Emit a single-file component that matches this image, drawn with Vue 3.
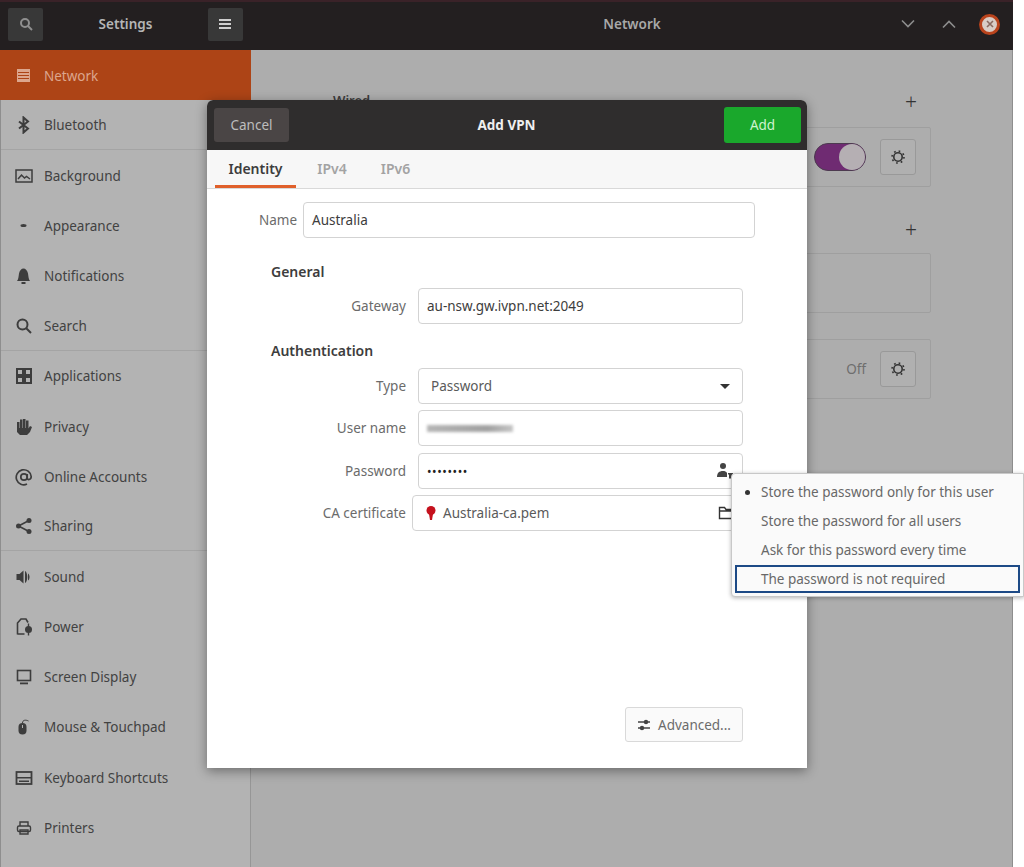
<script setup>
const navItems = [
  { label: 'Network', icon: 'network', active: true },
  { label: 'Bluetooth', icon: 'bluetooth', divider: true },
  { label: 'Background', icon: 'background' },
  { label: 'Appearance', icon: 'appearance' },
  { label: 'Notifications', icon: 'bell' },
  { label: 'Search', icon: 'search', divider: true },
  { label: 'Applications', icon: 'apps' },
  { label: 'Privacy', icon: 'hand' },
  { label: 'Online Accounts', icon: 'at' },
  { label: 'Sharing', icon: 'share', divider: true },
  { label: 'Sound', icon: 'sound' },
  { label: 'Power', icon: 'power' },
  { label: 'Screen Display', icon: 'screen' },
  { label: 'Mouse & Touchpad', icon: 'mouse' },
  { label: 'Keyboard Shortcuts', icon: 'keyboard' },
  { label: 'Printers', icon: 'printer' }
]

const tabs = ['Identity', 'IPv4', 'IPv6']

const passwordOptions = [
  { label: 'Store the password only for this user', checked: true },
  { label: 'Store the password for all users' },
  { label: 'Ask for this password every time' },
  { label: 'The password is not required', focused: true }
]
</script>

<template>
  <div class="screen">
    <header class="titlebar">
      <div class="titlebar-left">
        <button class="bar-btn">
          <svg width="16" height="16" viewBox="0 0 16 16" fill="none" stroke="#8f8f8f" stroke-width="2"><circle cx="7" cy="7" r="4" /><path d="M10 10l4 4" /></svg>
        </button>
        <span class="app-title">Settings</span>
        <button class="bar-btn">
          <svg width="14" height="14" viewBox="0 0 14 14" fill="#cfcfcf"><rect x="1" y="2" width="12" height="2" /><rect x="1" y="6" width="12" height="2" /><rect x="1" y="10" width="12" height="2" /></svg>
        </button>
      </div>
      <div class="titlebar-center">Network</div>
      <div class="window-controls">
        <svg width="16" height="10" viewBox="0 0 16 10" fill="none" stroke="#8d8d8d" stroke-width="1.6"><path d="M2 1.5l6 6 6-6" /></svg>
        <svg width="16" height="10" viewBox="0 0 16 10" fill="none" stroke="#8d8d8d" stroke-width="1.6"><path d="M2 8.500l6-6 6 6" /></svg>
        <span class="close-btn">
          <svg width="8" height="8" viewBox="0 0 8 8" stroke="#8a6a60" stroke-width="1.6"><path d="M1 1l6 6M7 1l-6 6" /></svg>
        </span>
      </div>
    </header>

    <div class="body">
      <nav class="sidebar">
        <div
          v-for="item in navItems"
          :key="item.label"
          class="nav-item"
          :class="{ active: item.active, divider: item.divider }"
        >
          <svg class="nav-icon" width="18" height="18" viewBox="0 0 18 18">
            <g v-if="item.icon === 'network'"><path d="M2 2h13v13H2z" /><path d="M3 5.500h11M3 8.500h11M3 11.500h11" stroke="#ad4416" stroke-width="1.200" fill="none" /></g>
            <path v-else-if="item.icon === 'bluetooth'" d="M4 5.500l9 7-4.500 4V1.500l4.500 4-9 7" fill="none" stroke="#3d3d3d" stroke-width="2" />
            <g v-else-if="item.icon === 'background'" fill="none" stroke="#3d3d3d" stroke-width="1.500"><rect x="1" y="3" width="16" height="12" /><path d="M3 12l3.500-4 3 3 2-1.500 3.500 2.500" /></g>
            <ellipse v-else-if="item.icon === 'appearance'" cx="8.500" cy="8.500" rx="3" ry="1.500" />
            <path v-else-if="item.icon === 'bell'" d="M2 14c1.500-2 1.500-4.500 2-7.500C4.500 3.500 6.500 1.500 8.500 1.500s4 2 4.500 5c.5 3 .5 5.500 2 7.500zM6.500 15h4v2h-4z" />
            <g v-else-if="item.icon === 'search'" fill="none" stroke="#3d3d3d" stroke-width="2"><circle cx="7.500" cy="7.500" r="5" /><path d="M11 11l5 5" /></g>
            <g v-else-if="item.icon === 'apps'" fill="none" stroke="#3d3d3d" stroke-width="2"><rect x="2" y="2" width="6" height="6" /><rect x="10" y="2" width="6" height="6" /><rect x="2" y="10" width="6" height="6" /><rect x="10" y="10" width="6" height="6" /></g>
            <path v-else-if="item.icon === 'hand'" d="M2 4h2.500v6H5V1.500h2.500V10H8V1h2.500v9H11V2.500h2.500v8L15 8l2 1-2 5-3 3H5l-3-3z" />
            <g v-else-if="item.icon === 'at'" fill="none" stroke="#3d3d3d" stroke-width="1.700"><circle cx="9" cy="9" r="3.200" /><path d="M12.200 6v4c0 2.500 4 2 4-1.500A7.500 7.500 0 1 0 12 16" /></g>
            <g v-else-if="item.icon === 'share'"><circle cx="14" cy="3.500" r="2.500" /><circle cx="14" cy="14.500" r="2.500" /><circle cx="3.500" cy="9" r="2.500" /><path d="M14 3.500L3.500 9 14 14.500" fill="none" stroke="#3d3d3d" stroke-width="1.600" /></g>
            <path v-else-if="item.icon === 'sound'" d="M1.500 6h3l4-3.500v13l-4-3.500h-3zM10 3c3 1 3 11 0 12zM13 5.500c2 1 2 6 0 7z" />
            <g v-else-if="item.icon === 'power'"><path d="M2.500 16.500V5L6 1h5l2 3.500M2.500 16h7" fill="none" stroke="#3d3d3d" stroke-width="1.600" /><circle cx="13.500" cy="11.500" r="3.500" /><path d="M12.800 5.500h1.400v12h-1.400z" /></g>
            <g v-else-if="item.icon === 'screen'"><rect x="2.500" y="2.500" width="13" height="10" fill="none" stroke="#3d3d3d" stroke-width="1.600" /><rect x="5" y="14.500" width="8" height="1.800" /></g>
            <g v-else-if="item.icon === 'mouse'"><rect x="3.500" y="5" width="8" height="11.500" rx="4" /><path d="M7.500 5c0-3 3-3.500 6-2" fill="none" stroke="#3d3d3d" stroke-width="1" /><rect x="7" y="7" width="1" height="3" fill="#b3b3b3" /></g>
            <g v-else-if="item.icon === 'keyboard'"><rect x="1.500" y="3" width="15" height="12" fill="none" stroke="#3d3d3d" stroke-width="1.800" /><path d="M2 8h14v1.500H2z" /><path d="M4 11.500h10v1.500H4z" /></g>
            <g v-else-if="item.icon === 'printer'" fill="none" stroke="#3d3d3d" stroke-width="1.400"><path d="M5 7V3h8v4" /><rect x="2.500" y="7" width="13" height="5.500" rx="1.500" /><path d="M5 11h8v4H5z" /></g>
          </svg>
          <span>{{ item.label }}</span>
        </div>
      </nav>

      <main class="panel">
        <div class="panel-heading"><span class="panel-title">Wired</span><span class="plus">+</span></div>
        <div class="panel-card card-wired">
          <span class="switch"><span class="knob"></span></span>
          <span class="gear-btn">
            <svg width="16" height="16" viewBox="0 0 16 16" fill="none" stroke="#333"><circle cx="8" cy="8" r="4.200" stroke-width="1.600" /><circle cx="8" cy="8" r="6" stroke-width="1.600" stroke-dasharray="1.700 3" /></svg>
          </span>
        </div>
        <div class="panel-heading heading-vpn"><span></span><span class="plus">+</span></div>
        <div class="panel-card card-vpn"></div>
        <div class="panel-card card-proxy">
          <span class="off-label">Off</span>
          <span class="gear-btn">
            <svg width="16" height="16" viewBox="0 0 16 16" fill="none" stroke="#333"><circle cx="8" cy="8" r="4.200" stroke-width="1.600" /><circle cx="8" cy="8" r="6" stroke-width="1.600" stroke-dasharray="1.700 3" /></svg>
          </span>
        </div>
      </main>
    </div>

    <section class="dialog">
      <header class="dialog-header">
        <button class="btn-cancel">Cancel</button>
        <span class="dialog-title">Add VPN</span>
        <button class="btn-add">Add</button>
      </header>

      <div class="tabs">
        <span
          v-for="(tab, i) in tabs"
          :key="tab"
          class="tab"
          :class="{ current: i === 0 }"
        >{{ tab }}</span>
      </div>

      <div class="dialog-body">
        <div class="name-row">
          <label>Name</label>
          <div class="field">Australia</div>
        </div>

        <div class="form">
          <h3 class="section-title">General</h3>
          <label>Gateway</label>
          <div class="field">au-nsw.gw.ivpn.net:2049</div>

          <h3 class="section-title section-auth">Authentication</h3>
          <label>Type</label>
          <div class="field select">
            <span>Password</span>
            <span class="caret"></span>
          </div>
          <label>User name</label>
          <div class="field"><span class="blurred-name"></span></div>
          <label>Password</label>
          <div class="field field-password">
            <span class="dots">••••••••</span>
            <svg width="18" height="18" viewBox="0 0 18 18" fill="#444"><circle cx="7" cy="4" r="3" /><path d="M1 15c0-4 2-6 6-6 2 0 3 .6 4 2v4z" /><path d="M12 11h5v1.500h-1v4h-3v-4h-1z" /></svg>
          </div>
          <label>CA certificate</label>
          <div class="field field-file">
            <svg class="cert-icon" width="10" height="14" viewBox="0 0 10 14" fill="#c5111d"><circle cx="5" cy="4.500" r="4.500" /><path d="M3 8h4l-1 6H4z" /></svg>
            <span class="file-name">Australia-ca.pem</span>
            <svg width="16" height="16" viewBox="0 0 16 16" fill="none" stroke="#333" stroke-width="1.400"><path d="M1.500 13.500v-11h5l1.500 2h6.500v9zM1.500 6h13" /></svg>
          </div>
        </div>

        <div class="dialog-footer">
          <button class="btn-advanced">
            <svg width="14" height="14" viewBox="0 0 14 14" fill="none" stroke="#444" stroke-width="1.400"><path d="M1 4h12M1 10h12" /><circle cx="9" cy="4" r="1.500" fill="#444" /><circle cx="5" cy="10" r="1.500" fill="#444" /></svg>
            <span>Advanced...</span>
          </button>
        </div>
      </div>
    </section>

    <div class="popover">
      <div
        v-for="option in passwordOptions"
        :key="option.label"
        class="popover-item"
        :class="{ focused: option.focused }"
      >
        <span class="bullet"><span v-if="option.checked" class="bullet-dot"></span></span>
        <span>{{ option.label }}</span>
      </div>
    </div>
  </div>
</template>

<style>
html, body {
  margin: 0;
  background: #fff;
}
</style>

<style scoped>
.screen {
  position: relative;
  width: 1024px;
  height: 867px;
  overflow: hidden;
  font-family: "Noto Sans", "Open Sans", sans-serif;
  font-size: 13.5px;
  color: #3d3d3d;
}

button {
  font: inherit;
  border: none;
  padding: 0;
}

.titlebar {
  width: 1013px;
  height: 50px;
  box-sizing: border-box;
  padding-bottom: 2px;
  display: flex;
  align-items: center;
  background: #231f20;
  box-shadow: inset 0 2px 0 #3a2228;
}

.titlebar-left {
  width: 251px;
  box-sizing: border-box;
  padding: 0 8px;
  display: flex;
  align-items: center;
  justify-content: space-between;
}

.bar-btn {
  width: 35px;
  height: 33px;
  display: flex;
  align-items: center;
  justify-content: center;
  background: #383838;
  border-radius: 2px;
}

.app-title {
  font-weight: 600;
  color: #b5b5b5;
}

.titlebar-center {
  flex: 1;
  text-align: center;
  font-weight: 600;
  color: #a8a8a8;
  padding-left: 113px;
}

.window-controls {
  display: flex;
  align-items: center;
  gap: 25px;
  padding-right: 13px;
}

.close-btn {
  width: 21px;
  height: 21px;
  margin-left: -3px;
  display: flex;
  align-items: center;
  justify-content: center;
  border-radius: 50%;
  background: #d9cdc6;
  border: 3px solid #b9431c;
  box-sizing: border-box;
}

.body {
  display: flex;
  width: 1013px;
  height: 817px;
}

.sidebar {
  width: 251px;
  flex-shrink: 0;
  box-sizing: border-box;
  background: #b3b3b3;
  border-left: 1px solid #8e8e8e;
  border-right: 1px solid #969696;
}

.nav-item {
  height: 50.15px;
  box-sizing: border-box;
  display: flex;
  align-items: center;
  gap: 11px;
  padding: 1px 0 0 14px;
  color: #424242;
}

.nav-item.active {
  background: #ad4416;
  color: #dca68d;
  margin-left: -1px;
  padding-left: 15px;
  margin-right: -1px;
}

.nav-item.divider {
  border-bottom: 1px solid #a4a4a4;
}

.nav-icon {
  flex-shrink: 0;
  fill: #3d3d3d;
}

.nav-item.active .nav-icon {
  fill: #dca68d;
}

.panel {
  flex: 1;
  background: #adadad;
  border-right: 1px solid #8e8e8e;
  box-sizing: border-box;
  padding: 41px 81px 0 82px;
}

.panel-heading {
  height: 36px;
  display: flex;
  justify-content: space-between;
  align-items: flex-start;
}

.panel-title {
  font-weight: 600;
  font-size: 13px;
  color: #3d3d3d;
}

.plus {
  font-size: 21px;
  line-height: 22px;
  color: #333;
  font-weight: 300;
  margin-right: 14px;
}

.panel-card {
  border: 1px solid #9f9f9f;
  border-radius: 2px;
  margin-left: auto;
  width: 597px;
  box-sizing: border-box;
  display: flex;
  align-items: center;
  justify-content: flex-end;
  gap: 14px;
  padding-right: 14px;
}

.card-wired {
  height: 60px;
}

.heading-vpn {
  margin-top: 32px;
  height: 34px;
}

.card-vpn {
  height: 60px;
}

.card-proxy {
  height: 60px;
  margin-top: 26px;
}

.off-label {
  color: #6e6e6e;
}

.switch {
  width: 52px;
  height: 28px;
  box-sizing: border-box;
  border: 1px solid #4d3a50;
  border-radius: 14px;
  background: #6f2b72;
  display: flex;
  justify-content: flex-end;
}

.knob {
  width: 26px;
  height: 26px;
  border-radius: 50%;
  background: #b5afb3;
}

.gear-btn {
  width: 36px;
  height: 36px;
  box-sizing: border-box;
  border: 1px solid #999;
  border-radius: 3px;
  background: #b0b0b0;
  display: flex;
  align-items: center;
  justify-content: center;
}

.dialog {
  position: absolute;
  left: 207px;
  top: 100px;
  width: 600px;
  height: 668px;
  display: flex;
  flex-direction: column;
  background: #fff;
  border-radius: 6px 6px 0 0;
  box-shadow: 0 3px 12px rgba(0, 0, 0, 0.4);
}

.dialog-header {
  height: 50px;
  flex-shrink: 0;
  box-sizing: border-box;
  padding: 7px 6px 7px 7px;
  display: flex;
  align-items: center;
  justify-content: space-between;
  background: #2f2d2d;
  border-radius: 6px 6px 0 0;
}

.btn-cancel {
  width: 75px;
  height: 34px;
  background: #4a4545;
  color: #bdbdbd;
  border-radius: 3px;
}

.dialog-title {
  font-weight: 700;
  color: #efefef;
}

.btn-add {
  width: 77px;
  height: 36px;
  background: #1aa82c;
  color: #cff3cf;
  border-radius: 3px;
}

.tabs {
  height: 39px;
  flex-shrink: 0;
  box-sizing: border-box;
  padding-left: 8px;
  display: flex;
  gap: 8.5px;
  background: #f7f7f7;
  border-bottom: 1px solid #d9d9d9;
}

.tab {
  width: 55px;
  box-sizing: border-box;
  height: 38px;
  line-height: 37px;
  text-align: center;
  font-weight: 600;
  color: #a3a3a3;
  font-size: 14px;
}

.tab.current {
  width: 81px;
  margin-right: -8.5px;
  color: #3d3d3d;
  border-bottom: 3px solid #e0602b;
}

.tab.current + .tab {
  margin-left: 8.5px;
}

.dialog-body {
  flex: 1;
  display: flex;
  flex-direction: column;
  padding: 13px 64px 26px 40px;
  box-sizing: border-box;
}

.name-row {
  display: flex;
  align-items: center;
  gap: 6px;
  margin-right: -12px;
}

.name-row label {
  width: 50px;
}

.name-row .field {
  flex: 1;
}

label {
  color: #6b6b6b;
  text-align: right;
}

.field {
  height: 36px;
  box-sizing: border-box;
  border: 1px solid #d3d3d3;
  border-radius: 4px;
  padding: 0 8px;
  display: flex;
  align-items: center;
  background: #fff;
  color: #3d3d3d;
}

.form {
  display: grid;
  grid-template-columns: 159px 1fr;
  column-gap: 12px;
  row-gap: 6px;
  align-items: center;
  margin-top: 24px;
}

.section-title {
  grid-column: 1 / -1;
  margin: 0 0 0 24px;
  font-size: 14px;
  font-weight: 600;
  line-height: 20px;
  color: #3d3d3d;
}

.section-auth {
  margin-top: 11px;
  margin-bottom: 1px;
}

.select {
  justify-content: space-between;
  padding: 0 12px;
  color: #5a5a5a;
}

.caret {
  width: 0;
  height: 0;
  border-left: 5px solid transparent;
  border-right: 5px solid transparent;
  border-top: 5px solid #333;
}

.blurred-name {
  width: 86px;
  height: 7px;
  background: linear-gradient(90deg, #b5b5b5, #a0a0a0 70%, #c5c5c5);
  filter: blur(1.500px);
}

.field-password {
  margin-top: 1px;
  justify-content: space-between;
  padding-right: 8px;
}

.dots {
  font-size: 12px;
  letter-spacing: 0.6px;
  color: #222;
}

.field-file {
  margin-left: -6px;
  gap: 7px;
  padding-right: 8px;
  color: #5a5a5a;
}

.cert-icon {
  margin-left: 5px;
}

.file-name {
  flex: 1;
}

.dialog-footer {
  margin-top: auto;
  display: flex;
  justify-content: flex-end;
}

.btn-advanced {
  width: 118px;
  height: 35px;
  display: flex;
  align-items: center;
  justify-content: center;
  gap: 7px;
  background: #fafafa;
  border: 1px solid #d9d9d9;
  border-radius: 3px;
  color: #6b6b6b;
}

.popover {
  position: absolute;
  left: 731px;
  top: 473px;
  width: 293px;
  height: 124px;
  box-sizing: border-box;
  padding: 4px 3px 3px 3px;
  display: flex;
  flex-direction: column;
  justify-content: space-between;
  background: #fafafa;
  border: 1px solid #c8c8c8;
  border-radius: 4px 0 0 4px;
  box-shadow: 0 1px 4px rgba(0, 0, 0, 0.3);
  color: #686868;
}

.popover-item {
  height: 28px;
  box-sizing: border-box;
  display: flex;
  align-items: center;
  padding-left: 3px;
  border: 2px solid transparent;
}

.popover-item.focused {
  border-color: #1d4a86;
}

.bullet {
  width: 21px;
  display: flex;
}

.bullet-dot {
  width: 5px;
  height: 5px;
  margin-left: 5px;
  border-radius: 50%;
  background: #333;
}
</style>
